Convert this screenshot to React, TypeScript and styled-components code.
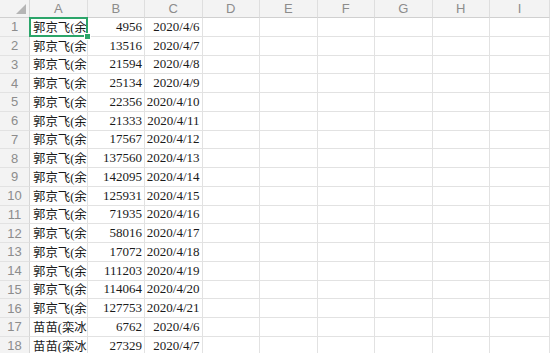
import React from "react";
import styled, { createGlobalStyle } from "styled-components";

const Global = createGlobalStyle`
  html, body { margin: 0; padding: 0; background: #fff; overflow: hidden; }
  body { width: 550px; height: 353px; }
`;

const Sheet = styled.div`
  display: grid;
  grid-template-columns: 30px repeat(8, 57.5px) 1fr;
  grid-auto-rows: 18.75px;
  grid-template-rows: 18px;
  width: 550px;
  height: 353px;
  overflow: hidden;
`;

const Corner = styled.div`
  position: relative;
  background: #f3f3f3;
  border-right: 1px solid #d6d6d6;
  border-bottom: 1px solid #d0d0d0;
  box-sizing: border-box;
  &::after {
    content: "";
    position: absolute;
    right: 3px;
    bottom: 3px;
    width: 0;
    height: 0;
    border-left: 10px solid transparent;
    border-bottom: 10px solid #b5b5b5;
  }
`;

const ColHead = styled.div`
  background: #f3f3f3;
  border-right: 1px solid #dedede;
  border-bottom: 1px solid #d0d0d0;
  box-sizing: border-box;
  display: flex;
  align-items: center;
  justify-content: center;
  font-family: "Liberation Sans", Arial, sans-serif;
  font-size: 13px;
  color: #8c8c8c;
`;

const RowHead = styled.div`
  background: #f3f3f3;
  border-right: 1px solid #d6d6d6;
  border-bottom: 1px solid #e2e2e2;
  box-sizing: border-box;
  display: flex;
  align-items: center;
  justify-content: center;
  font-family: "Liberation Sans", Arial, sans-serif;
  font-size: 13px;
  color: #8c8c8c;
`;

const Cell = styled.div<{ $align?: "left" | "right"; $selected?: boolean; $cjk?: boolean }>`
  position: relative;
  z-index: ${(p) => (p.$selected ? 2 : 0)};
  border-right: 1px solid #e2e2e2;
  border-bottom: 1px solid #e2e2e2;
  box-sizing: border-box;
  display: flex;
  align-items: center;
  justify-content: ${(p) => (p.$align === "right" ? "flex-end" : "flex-start")};
  padding: ${(p) => (p.$cjk ? "0 0 0 3px" : "0 2px 0 3px")};
  overflow: ${(p) => (p.$selected ? "visible" : "hidden")};
  white-space: nowrap;
  font-family: "Liberation Serif", "Noto Sans CJK SC", serif;
  font-size: ${(p) => (p.$cjk ? "12.4px" : "13px")};
  color: #1a1a1a;
`;

const Clip = styled.span`
  display: block;
  overflow: hidden;
  width: 100%;
`;

const Selection = styled.div`
  position: absolute;
  left: -1px;
  top: -1px;
  right: -1px;
  bottom: -1px;
  border: 2px solid #2ca56a;
  pointer-events: none;
  &::after {
    content: "";
    position: absolute;
    right: -5px;
    bottom: -5px;
    width: 7px;
    height: 7px;
    background: #2ca56a;
    border: 1px solid #fff;
    box-sizing: border-box;
  }
`;

const cols = ["A", "B", "C", "D", "E", "F", "G", "H", "I"];

const vals = [
  4956, 13516, 21594, 25134, 22356, 21333, 17567, 137560, 142095, 125931,
  71935, 58016, 17072, 111203, 114064, 127753,
];

type Row = { name: string; value: number; date: string };

const rows: Row[] = [
  ...vals.map((v, i) => ({ name: "郭京飞(余", value: v, date: `2020/4/${6 + i}` })),
  { name: "苗苗(栾冰", value: 6762, date: "2020/4/6" },
  { name: "苗苗(栾冰", value: 27329, date: "2020/4/7" },
];

export default function App() {
  return (
    <>
      <Global />
      <Sheet>
        <Corner />
        {cols.map((c) => (
          <ColHead key={c}>{c}</ColHead>
        ))}
        {rows.map((r, i) => (
          <React.Fragment key={i}>
            <RowHead>{i + 1}</RowHead>
            <Cell $cjk $selected={i === 0}>
              <Clip>{r.name}</Clip>
              {i === 0 && <Selection />}
            </Cell>
            <Cell $align="right">{r.value}</Cell>
            <Cell $align="right">{r.date}</Cell>
            {cols.slice(3).map((c) => (
              <Cell key={c} />
            ))}
          </React.Fragment>
        ))}
      </Sheet>
    </>
  );
}
